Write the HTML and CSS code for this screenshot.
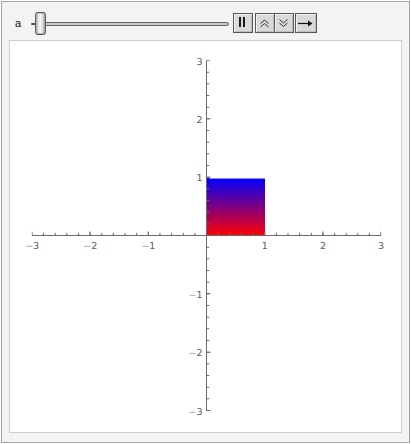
FILE: index.html
```html
<!DOCTYPE html>
<html>
<head>
<meta charset="utf-8">
<link rel="stylesheet" href="styles.css">
</head>
<body>
<div class="frame">
  <div class="controls">
    <span class="label">a</span>
    <div class="slider">
      <div class="cap"></div>
      <div class="track"></div>
      <div class="thumb"></div>
    </div>
    <button class="btn pause" type="button">
      <svg width="18" height="18" viewBox="0 0 18 18"><rect x="5" y="3" width="2" height="10" fill="#1a1a1a"/><rect x="9" y="3" width="2" height="10" fill="#1a1a1a"/></svg>
    </button>
    <div class="group">
      <button class="btn" type="button">
        <svg width="18" height="18" viewBox="0 0 18 18"><path d="M4.5 9.5 L8.5 6 L12.5 9.5 M4.5 13 L8.5 9.5 L12.5 13" fill="none" stroke="#333" stroke-width="1"/></svg>
      </button>
      <button class="btn second" type="button">
        <svg width="18" height="18" viewBox="0 0 18 18"><path d="M4.5 5.5 L8.5 9 L12.5 5.5 M4.5 9 L8.5 12.5 L12.5 9" fill="none" stroke="#333" stroke-width="1"/></svg>
      </button>
    </div>
    <button class="btn arrow" type="button">
      <svg width="20" height="18" viewBox="0 0 20 18"><path d="M2 9.5 H15" stroke="#111" stroke-width="1.2"/><path d="M12 6.5 L16.5 9.5 L12 12.5 Z" fill="#111"/></svg>
    </button>
  </div>
  <div class="panel">
    <svg class="plot" width="391" height="391" viewBox="10 41 391 391">
      <defs>
        <linearGradient id="grad" x1="0" y1="0" x2="0" y2="1">
          <stop offset="0" stop-color="#0000ff"/>
          <stop offset="1" stop-color="#ff0000"/>
        </linearGradient>
      </defs>
      <rect x="207" y="178" width="58" height="58" fill="url(#grad)"/>
      <line x1="209" y1="178.5" x2="265" y2="178.5" stroke="#8a8aff" stroke-width="1"/>
      <g stroke="#6b6b6b" fill="none">
        <!-- x axis -->
        <line x1="31.9" y1="235.5" x2="381.1" y2="235.5" stroke-width="1"/>
        <line x1="31.9" y1="234" x2="381.1" y2="234" stroke-width="2.5" stroke-dasharray="1 10.64" stroke-dashoffset="0.5"/>
        <line x1="31.9" y1="233.5" x2="381.1" y2="233.5" stroke-width="4" stroke-dasharray="1 57.2" stroke-dashoffset="0.5"/>
        <!-- y axis -->
        <line x1="206.5" y1="60.5" x2="206.5" y2="411" stroke-width="1"/>
        <line x1="208" y1="60.5" x2="208" y2="411" stroke-width="2.5" stroke-dasharray="1 10.666" stroke-dashoffset="0.5"/>
        <line x1="208.5" y1="60.5" x2="208.5" y2="411" stroke-width="4" stroke-dasharray="1 57.33" stroke-dashoffset="0.5"/>
      </g>
      <g class="xl">
        <text x="32" y="248.5"><tspan class="m">−</tspan>3</text>
        <text x="90.2" y="248.5"><tspan class="m">−</tspan>2</text>
        <text x="148.4" y="248.5"><tspan class="m">−</tspan>1</text>
        <text x="264.7" y="248.5">1</text>
        <text x="322.9" y="248.5">2</text>
        <text x="381.1" y="248.5">3</text>
      </g>
      <g class="yl">
        <text x="202.5" y="64.5">3</text>
        <text x="202.5" y="122.8">2</text>
        <text x="202.5" y="181">1</text>
        <text x="202.5" y="298"><tspan class="m">−</tspan>1</text>
        <text x="202.5" y="356.3"><tspan class="m">−</tspan>2</text>
        <text x="202.5" y="414.5"><tspan class="m">−</tspan>3</text>
      </g>
    </svg>
  </div>
</div>
</body>
</html>
```

FILE: styles.css
```css
html, body {
  margin: 0;
  padding: 0;
  background: #ffffff;
}

.frame {
  margin: 1px;
  width: 407px;
  height: 440px;
  border: 1px solid #a4a4a4;
  background: #f3f3f3;
  font-family: "Liberation Sans", Arial, sans-serif;
}

.controls {
  height: 38px;
  display: flex;
  align-items: flex-start;
}

.label {
  margin-left: 13px;
  width: 16px;
  margin-top: 10px;
  line-height: 22px;
  font-size: 11px;
  color: #111;
}

.slider {
  position: relative;
  width: 198px;
  height: 23px;
  margin-top: 10px;
  display: flex;
  align-items: center;
}

.cap {
  position: absolute;
  left: 0;
  top: 10.5px;
  width: 5px;
  height: 2px;
  border-radius: 1px;
  background: #555;
}

.track {
  flex: 1;
  margin-left: 4px;
  height: 2px;
  border: 1px solid #666;
  border-radius: 2px;
  background: #c9c9c9;
}

.thumb {
  position: absolute;
  left: 4px;
  top: 0;
  width: 9px;
  height: 21px;
  border: 1px solid #5a5a5a;
  border-radius: 3px / 4px;
  background: linear-gradient(to right, #a9a9a9 0%, #e8e8e8 30%, #f7f7f7 50%, #d8d8d8 75%, #9c9c9c 100%);
  box-shadow: inset 0 1px 0 #c4c4c4, inset 0 -1px 0 #b0b0b0;
}

.btn {
  margin: 11px 0 0 0;
  padding: 0;
  width: 20px;
  height: 20px;
  border: 1px solid #575757;
  background: #d9d9d9;
  box-shadow: inset 1px 1px 0 #f2f2f2, inset -1px -1px 0 #bdbdbd;
  display: flex;
  align-items: center;
  justify-content: center;
}

.btn svg {
  display: block;
}

.pause {
  margin-left: 4px;
}

.group {
  display: flex;
  margin-left: 2px;
}

.group .second {
  margin-left: -1px;
}

.arrow {
  width: 22px;
  margin-left: 1px;
}

.panel {
  margin: 0 7px;
  width: 391px;
  height: 391px;
  border: 1px solid #cfcfcf;
  background: #ffffff;
}

.plot {
  display: block;
}

.plot text {
  font-family: "DejaVu Sans", sans-serif;
  font-size: 9.5px;
  fill: #5c5c5c;
}

.xl text {
  text-anchor: middle;
}

.yl text {
  text-anchor: end;
}

.plot .m {
  fill: #a0a0a0;
}
```
